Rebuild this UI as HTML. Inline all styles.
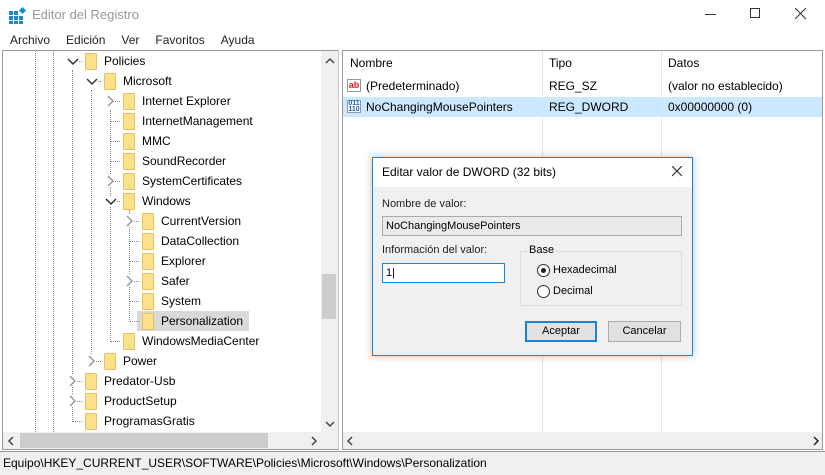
<!DOCTYPE html>
<html><head><meta charset="utf-8"><style>
*{margin:0;padding:0;box-sizing:border-box}
body{width:825px;height:475px;background:#fff;font-family:"Liberation Sans",sans-serif;font-size:12px;color:#000;position:relative;overflow:hidden}
.a{position:absolute;white-space:nowrap}
.row{position:absolute;height:20px;line-height:20px;font-size:12px}
.fold{position:absolute;width:12px;height:17px;background:#fde18a;border:1px solid #e8c060;border-radius:1px}
.chev{position:absolute;background:#fff}
.vd{position:absolute;border-left:1px dotted #888;width:0}
.hd{position:absolute;border-top:1px dotted #888;height:0}
</style></head><body>
<svg class="a" style="left:9px;top:7px" width="18" height="17"><g fill="#1a8ad4"><rect x="0" y="4" width="4" height="4"/><rect x="5" y="4" width="4" height="4"/><rect x="0" y="9" width="4" height="4"/><rect x="5" y="9" width="4" height="4"/><rect x="10" y="9" width="4" height="4"/><rect x="0" y="14" width="4" height="3"/><rect x="5" y="14" width="4" height="3"/><rect x="10" y="14" width="4" height="3"/><rect x="11" y="1" width="5" height="5" transform="rotate(45 13.5 3.5)"/></g></svg>
<div class="a" style="left:32px;top:7px;font-size:13px;color:#999">Editor del Registro</div>
<div class="a" style="left:705px;top:14px;width:11px;border-top:1px solid #333"></div>
<div class="a" style="left:750px;top:8px;width:10px;height:10px;border:1px solid #333"></div>
<svg class="a" style="left:795px;top:8px" width="12" height="12"><path d="M0 0L11 11M11 0L0 11" stroke="#333" stroke-width="1"/></svg>
<div class="a" style="left:10px;top:33px;font-size:12px;color:#222;word-spacing:2px">Archivo&nbsp;&nbsp;&nbsp;Edición&nbsp;&nbsp;&nbsp;Ver&nbsp;&nbsp;&nbsp;Favoritos&nbsp;&nbsp;&nbsp;Ayuda</div>
<div class="a" style="left:2px;top:50px;width:337px;height:400px;border:1px solid #999;border-right:1px solid #ccc"></div>
<div class="a" style="left:321px;top:51px;width:17px;height:381px;background:#f0f0f0"></div>
<div class="a" style="left:322px;top:274px;width:14px;height:45px;background:#cdcdcd"></div>
<svg class="a" style="left:325px;top:57px" width="10" height="8"><path d="M1 6L5 2L9 6" stroke="#444" stroke-width="1.5" fill="none"/></svg>
<svg class="a" style="left:325px;top:420px" width="10" height="8"><path d="M1 2L5 6L9 2" stroke="#444" stroke-width="1.5" fill="none"/></svg>
<div class="a" style="left:3px;top:432px;width:335px;height:17px;background:#f0f0f0"></div>
<div class="a" style="left:20px;top:433px;width:248px;height:15px;background:#cdcdcd"></div>
<svg class="a" style="left:7px;top:436px" width="8" height="10"><path d="M6 1L2 5L6 9" stroke="#444" stroke-width="1.5" fill="none"/></svg>
<svg class="a" style="left:310px;top:436px" width="8" height="10"><path d="M2 1L6 5L2 9" stroke="#444" stroke-width="1.5" fill="none"/></svg>
<div class="vd" style="left:35px;top:51px;height:381px"></div>
<div class="vd" style="left:53px;top:51px;height:381px"></div>
<div class="vd" style="left:72px;top:70px;height:352px"></div>
<div class="vd" style="left:91px;top:90px;height:272px"></div>
<div class="vd" style="left:110px;top:110px;height:232px"></div>
<div class="vd" style="left:129px;top:210px;height:112px"></div>
<div class="a" style="left:137px;top:311px;width:112px;height:20px;background:#d9d9d9"></div>
<div id="tree"></div>
<div class="a" style="left:342px;top:50px;width:481px;height:400px;border:1px solid #999"></div>
<div class="a" style="left:542px;top:51px;height:381px;border-left:1px solid #e5e5e5"></div>
<div class="a" style="left:661px;top:51px;height:381px;border-left:1px solid #e5e5e5"></div>
<div class="a" style="left:350px;top:56px">Nombre</div>
<div class="a" style="left:549px;top:56px">Tipo</div>
<div class="a" style="left:668px;top:56px">Datos</div>
<div class="a" style="left:343px;top:97px;width:479px;height:20px;background:#cce8ff"></div>
<div class="a" style="left:347px;top:79px;width:14px;height:13px;border:1px solid #999;background:#fff;color:#d02020;font-size:9px;font-weight:bold;line-height:11px;text-align:center">ab</div>
<div class="a" style="left:366px;top:79px">(Predeterminado)</div>
<div class="a" style="left:549px;top:79px">REG_SZ</div>
<div class="a" style="left:668px;top:79px">(valor no establecido)</div>
<div class="a" style="left:347px;top:100px;width:14px;height:13px;border:1px solid #999;background:#fff;color:#1a5fb4;font-size:7px;font-weight:bold;line-height:6px;text-align:center">011<br>110</div>
<div class="a" style="left:366px;top:100px">NoChangingMousePointers</div>
<div class="a" style="left:549px;top:100px">REG_DWORD</div>
<div class="a" style="left:668px;top:100px">0x00000000 (0)</div>
<div class="a" style="left:343px;top:432px;width:479px;height:17px;background:#f0f0f0"></div>
<svg class="a" style="left:346px;top:436px" width="8" height="10"><path d="M6 1L2 5L6 9" stroke="#444" stroke-width="1.5" fill="none"/></svg>
<svg class="a" style="left:812px;top:436px" width="8" height="10"><path d="M2 1L6 5L2 9" stroke="#222" stroke-width="1.5" fill="none"/></svg>
<div class="a" style="left:0;top:451px;width:825px;height:24px;background:#f0f0f0;border-top:1px solid #999"></div>
<div class="a" style="left:3px;top:456px;font-size:12px">Equipo\HKEY_CURRENT_USER\SOFTWARE\Policies\Microsoft\Windows\Personalization</div>
<div class="a" style="left:372px;top:157px;width:321px;height:199px;background:#f0f0f0;border:1px solid #1883d7;box-shadow:0 0 8px rgba(0,0,0,.25)"></div>
<div class="a" style="left:373px;top:158px;width:319px;height:29px;background:#fff"></div>
<div class="a" style="left:382px;top:165px;font-size:12px">Editar valor de DWORD (32 bits)</div>
<svg class="a" style="left:672px;top:166px" width="11" height="11"><path d="M0 0L10 10M10 0L0 10" stroke="#333" stroke-width="1.2"/></svg>
<div class="a" style="left:382px;top:198px;font-size:11px;color:#222">Nombre de valor:</div>
<div class="a" style="left:382px;top:216px;width:300px;height:20px;border:1px solid #aaa;background:#eaeaea;font-size:11px;line-height:18px;padding-left:3px">NoChangingMousePointers</div>
<div class="a" style="left:382px;top:244px;font-size:11px;color:#222">Información del valor:</div>
<div class="a" style="left:382px;top:263px;width:123px;height:20px;border:1px solid #1883d7;background:#fff;font-size:11px;line-height:18px;padding-left:3px">1|</div>
<div class="a" style="left:520px;top:251px;width:162px;height:55px;border:1px solid #dcdcdc"></div>
<div class="a" style="left:527px;top:244px;font-size:11px;background:#f0f0f0;padding:0 2px">Base</div>
<div class="a" style="left:537px;top:264px;width:13px;height:13px;border:1px solid #333;border-radius:50%;background:#fff"></div>
<div class="a" style="left:541px;top:268px;width:5px;height:5px;border-radius:50%;background:#222"></div>
<div class="a" style="left:553px;top:264px;font-size:11px">Hexadecimal</div>
<div class="a" style="left:537px;top:285px;width:13px;height:13px;border:1px solid #333;border-radius:50%;background:#fff"></div>
<div class="a" style="left:553px;top:285px;font-size:11px">Decimal</div>
<div class="a" style="left:525px;top:321px;width:72px;height:21px;border:2px solid #1883d7;background:#e1e1e1;font-size:11px;text-align:center;line-height:17px">Aceptar</div>
<div class="a" style="left:608px;top:321px;width:73px;height:21px;border:1px solid #adadad;background:#e1e1e1;font-size:11px;text-align:center;line-height:19px">Cancelar</div>
<script>
var rows=[[0,'v','Policies'],[1,'v','Microsoft'],[2,'>','Internet Explorer'],[2,'','InternetManagement'],[2,'','MMC'],[2,'','SoundRecorder'],[2,'>','SystemCertificates'],[2,'v','Windows'],[3,'>','CurrentVersion'],[3,'','DataCollection'],[3,'','Explorer'],[3,'>','Safer'],[3,'','System'],[3,'','Personalization'],[2,'','WindowsMediaCenter'],[1,'>','Power'],[0,'>','Predator-Usb'],[0,'>','ProductSetup'],[0,'','ProgramasGratis']];
var h='';rows.forEach(function(r,i){var y=51+i*20,x=85+r[0]*19;
h+='<div class="hd" style="left:'+(x-13)+'px;top:'+(y+10)+'px;width:10px"></div>';
if(r[1]=='v'){h+='<svg class="chev" style="left:'+(x-18)+'px;top:'+(y+5)+'px" width="12" height="10"><path d="M1 3L6 8L11 3" stroke="#333" stroke-width="1.5" fill="none"/></svg>';}
else if(r[1]=='>'){h+='<svg class="chev" style="left:'+(x-17)+'px;top:'+(y+4)+'px" width="9" height="12"><path d="M2 1L7 6L2 11" stroke="#999" stroke-width="1.5" fill="none"/></svg>';}
h+='<div class="fold" style="left:'+x+'px;top:'+(y+2)+'px"></div>';
h+='<div class="row" style="left:'+(x+19)+'px;top:'+y+'px">'+r[2]+'</div>';});
document.getElementById('tree').innerHTML=h;
</script>
</body></html>
